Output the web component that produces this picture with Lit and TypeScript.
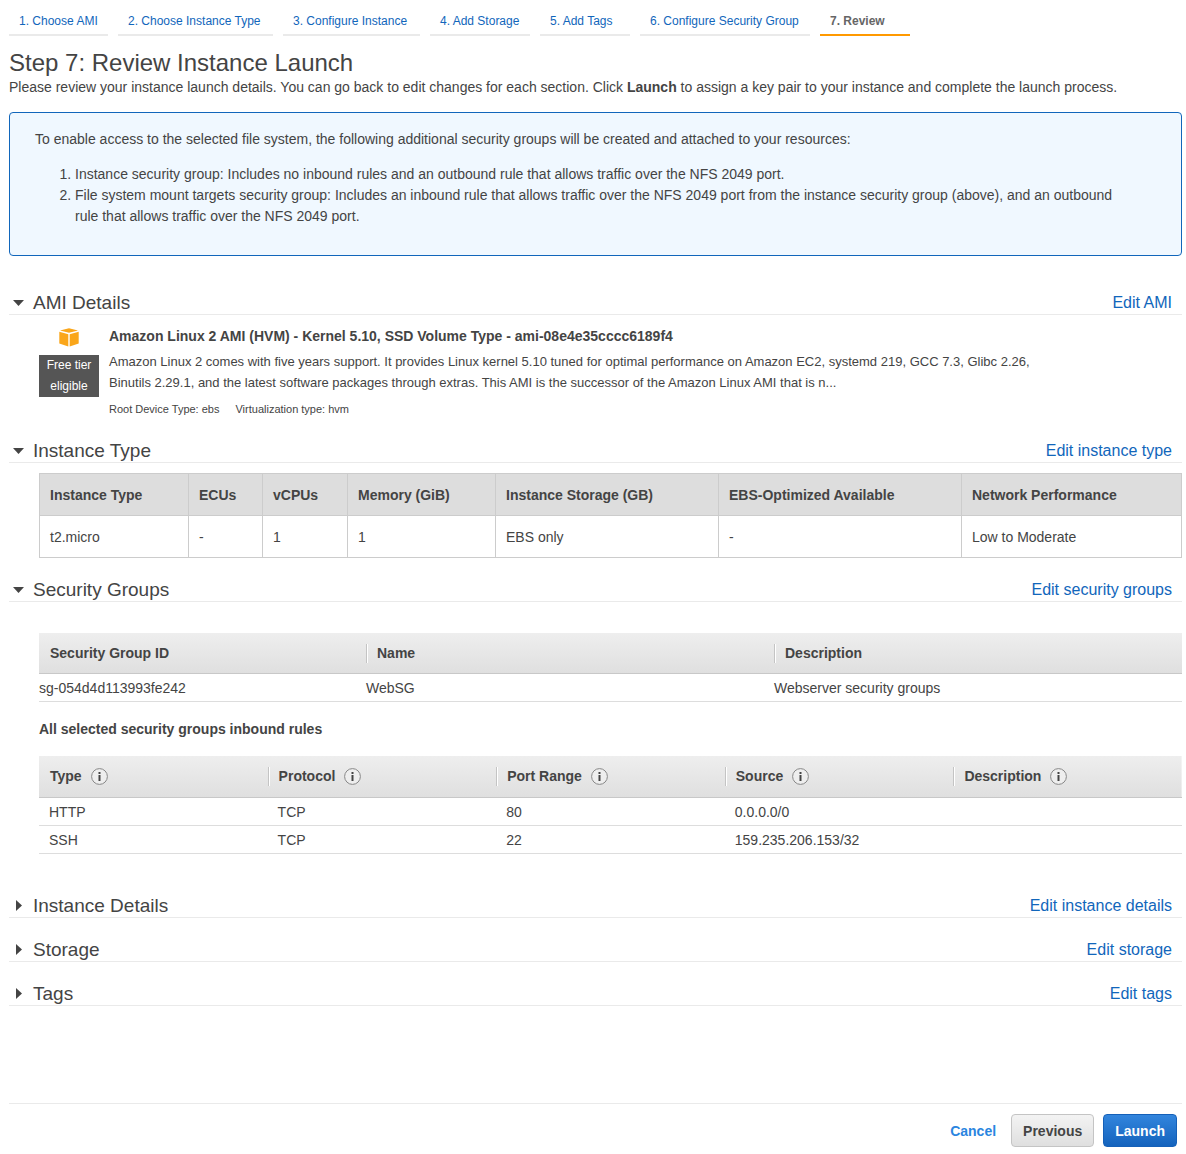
import { LitElement, html, css, nothing, TemplateResult } from "lit";
import { customElement, property, state } from "lit/decorators.js";
import { classMap } from "lit/directives/class-map.js";

const STEPS = [
  "1. Choose AMI",
  "2. Choose Instance Type",
  "3. Configure Instance",
  "4. Add Storage",
  "5. Add Tags",
  "6. Configure Security Group",
  "7. Review",
];

const INSTANCE_COLUMNS = [
  { title: "Instance Type", value: "t2.micro", size: "c-type" },
  { title: "ECUs", value: "-", size: "c-ecu" },
  { title: "vCPUs", value: "1", size: "c-cpu" },
  { title: "Memory (GiB)", value: "1", size: "c-mem" },
  { title: "Instance Storage (GB)", value: "EBS only", size: "c-store" },
  { title: "EBS-Optimized Available", value: "-", size: "c-ebs" },
  { title: "Network Performance", value: "Low to Moderate", size: "c-net" },
];

const RULE_COLUMNS = ["Type", "Protocol", "Port Range", "Source", "Description"];
const RULES = [
  ["HTTP", "TCP", "80", "0.0.0.0/0", ""],
  ["SSH", "TCP", "22", "159.235.206.153/32", ""],
];

@customElement("review-section")
export class ReviewSection extends LitElement {
  @property() heading = "";
  @property() action = "";
  @property({ type: Boolean }) open = false;

  static styles = css`
    :host {
      display: block;
    }
    .bar {
      display: flex;
      justify-content: space-between;
      align-items: center;
      height: 22px;
      padding: 2px 10px 0 0;
      border-bottom: 1px solid #eaeaea;
    }
    .title {
      margin: 0;
      font-size: 19px;
      font-weight: normal;
    }
    .toggle {
      display: flex;
      align-items: center;
      padding: 0 0 0 4px;
      border: 0;
      background: none;
      color: #444;
      font: inherit;
      line-height: 26px;
      cursor: pointer;
    }
    .arrow {
      width: 12px;
      height: 12px;
      margin-right: 8px;
      fill: #444;
    }
    .edit {
      color: #1166bb;
      font-size: 16px;
      line-height: 24px;
      text-decoration: none;
    }
  `;

  render() {
    return html`
      <div class="bar">
        <h2 class="title">
          <button
            class="toggle"
            aria-expanded=${this.open ? "true" : "false"}
            @click=${() => (this.open = !this.open)}
          >
            <svg class="arrow" viewBox="0 0 12 12" aria-hidden="true">
              <path d=${this.open ? "M0 3h11L5.500 9z" : "M3 0v11l6-5.500z"} />
            </svg>
            ${this.heading}
          </button>
        </h2>
        <a class="edit" href="#">${this.action}</a>
      </div>
      ${this.open ? html`<slot></slot>` : nothing}
    `;
  }
}

@customElement("app-root")
export class AppRoot extends LitElement {
  @state() private current = 6;

  static styles = css`
    :host {
      display: block;
      color: #444;
      background: #fff;
      font-family: "Liberation Sans", Arial, sans-serif;
      font-size: 14px;
      line-height: 21px;
    }
    .page {
      padding: 6px 4px 7px 9px;
    }
    .steps {
      display: grid;
      grid-template-columns: 99px 155px 137px 100px 90px 170px 90px;
      gap: 10px;
      margin: 0;
      padding: 0;
      list-style: none;
      font-size: 12px;
    }
    .step {
      box-sizing: border-box;
      height: 30px;
      padding: 5px 10px 0;
      border-bottom: 2px solid #eaeaea;
      white-space: nowrap;
    }
    .step.current {
      border-color: #f90;
      font-weight: bold;
    }
    .step-link {
      color: #1166bb;
      text-decoration: none;
    }
    .current .step-link {
      color: #666;
    }
    .heading {
      margin: 12px 0 0;
      font-size: 24px;
      font-weight: normal;
      line-height: 30px;
    }
    .intro {
      margin: 0 0 16px;
      line-height: 18px;
    }
    .notice {
      padding: 16px 50px 28px 25px;
      border: 1px solid #1166bb;
      border-radius: 4px;
      background: #f0f8ff;
    }
    .notice-text {
      margin: 0 0 14px;
    }
    .notice-list {
      margin: 0;
      padding-left: 40px;
    }
    review-section.first {
      margin-top: 34px;
    }
    .ami {
      display: flex;
      gap: 10px;
      padding: 10px 140px 0 30px;
      height: 113px;
    }
    .badge {
      display: flex;
      flex: none;
      flex-direction: column;
      align-items: center;
      gap: 7px;
      width: 60px;
    }
    .cube {
      width: 20px;
      height: 20px;
      margin-top: 3px;
    }
    .free {
      width: 60px;
      background: #555;
      color: #fff;
      font-size: 12px;
      text-align: center;
    }
    .ami-name {
      margin: 0;
      font-size: 14px;
      line-height: 22px;
    }
    .ami-text {
      margin: 4px 0;
      font-size: 13px;
    }
    .ami-meta {
      display: flex;
      gap: 16px;
      margin: 0;
      font-size: 11px;
      line-height: 24px;
    }
    table {
      width: 100%;
      table-layout: fixed;
      border-collapse: collapse;
    }
    th,
    td {
      text-align: left;
    }
    .body {
      padding-left: 30px;
    }
    .instance {
      padding-top: 10px;
      padding-bottom: 19px;
    }
    .specs th,
    .specs td {
      height: 39px;
      padding: 2px 10px 0;
      border: 1px solid #ccc;
    }
    .specs th {
      background: #ddd;
    }
    .c-type {
      width: 128px;
    }
    .c-ecu {
      width: 53px;
    }
    .c-cpu {
      width: 64px;
    }
    .c-mem {
      width: 127px;
    }
    .c-store {
      width: 202px;
    }
    .c-ebs {
      width: 222px;
    }
    .security {
      padding-top: 31px;
      padding-bottom: 39px;
    }
    .grid thead tr {
      background: linear-gradient(#eee, #dfdfdf);
    }
    .grid th {
      height: 40px;
      padding: 0;
      border-bottom: 1px solid #c8c8c8;
    }
    .grid td {
      height: 25px;
      padding: 2px 0 0;
      border-bottom: 1px solid #ddd;
    }
    .rules th {
      height: 41px;
    }
    .rules td {
      padding-left: 10px;
    }
    .label {
      display: flex;
      align-items: center;
      gap: 9px;
      height: 19px;
      padding-left: 10px;
      border-left: 1px solid #c4c4c4;
      box-shadow: inset 1px 0 #fff;
    }
    .label.lead {
      border-color: transparent;
      box-shadow: none;
    }
    .c-id {
      width: 327px;
    }
    .c-name {
      width: 408px;
    }
    .sub {
      margin: 17px 0 16px;
      font-size: 14px;
    }
    .info {
      display: flex;
      padding: 0;
      border: 0;
      background: none;
    }
    .info-icon {
      width: 17px;
      height: 17px;
    }
    .collapsed {
      display: grid;
      gap: 19px;
    }
    .footer {
      display: flex;
      justify-content: flex-end;
      align-items: center;
      gap: 9px;
      margin-top: 97px;
      padding: 10px 5px 0 0;
      border-top: 1px solid #eaeaea;
    }
    .btn {
      box-sizing: border-box;
      height: 33px;
      padding: 1px 11px 0;
      border: 1px solid #c4c4c4;
      border-radius: 4px;
      background: linear-gradient(#f3f3f3, #dfdfdf);
      color: #444;
      font: bold 14px/21px "Liberation Sans", Arial, sans-serif;
      cursor: pointer;
    }
    .btn.plain {
      padding: 1px 5px 0;
      border-color: transparent;
      background: none;
      color: #2a85e0;
    }
    .btn.primary {
      border-color: #1560b8;
      background: linear-gradient(#3285dd, #1463bd);
      color: #fff;
    }
  `;

  private infoButton(name: string): TemplateResult {
    return html`<button class="info" aria-label=${name}>
      <svg class="info-icon" viewBox="0 0 17 17" aria-hidden="true">
        <circle cx="8.500" cy="8.500" r="7.900" fill="#eee" stroke="#888" />
        <path d="M7.500 4h2v2h-2zM7.500 7h2v6h-2z" fill="#444" />
      </svg>
    </button>`;
  }

  private amiSection() {
    return html`<review-section class="first" heading="AMI Details" action="Edit AMI" open>
      <div class="ami">
        <div class="badge">
          <svg class="cube" viewBox="0 0 20 20" aria-hidden="true">
            <g fill="#faa61a">
              <path d="M1 2.400 10 .2l9 2.200-9 2.300z" />
              <path d="M.3 3.700 9.300 6.200V18.500L.3 15.600z" />
              <path d="M19.700 3.700 10.700 6.200V18.500l9-2.900z" />
            </g>
          </svg>
          <div class="free">Free tier<br />eligible</div>
        </div>
        <div>
          <h3 class="ami-name">
            Amazon Linux 2 AMI (HVM) - Kernel 5.10, SSD Volume Type - ami-08e4e35cccc6189f4
          </h3>
          <p class="ami-text">
            Amazon Linux 2 comes with five years support. It provides Linux kernel 5.10 tuned for
            optimal performance on Amazon EC2, systemd 219, GCC 7.3, Glibc 2.26, Binutils 2.29.1,
            and the latest software packages through extras. This AMI is the successor of the
            Amazon Linux AMI that is n...
          </p>
          <p class="ami-meta">
            <span>Root Device Type: ebs</span><span>Virtualization type: hvm</span>
          </p>
        </div>
      </div>
    </review-section>`;
  }

  private instanceSection() {
    return html`<review-section heading="Instance Type" action="Edit instance type" open>
      <div class="body instance">
        <table class="specs">
          <thead>
            <tr>
              ${INSTANCE_COLUMNS.map((c) => html`<th scope="col" class=${c.size}>${c.title}</th>`)}
            </tr>
          </thead>
          <tbody>
            <tr>
              ${INSTANCE_COLUMNS.map((c) => html`<td>${c.value}</td>`)}
            </tr>
          </tbody>
        </table>
      </div>
    </review-section>`;
  }

  private securitySection() {
    return html`<review-section heading="Security Groups" action="Edit security groups" open>
      <div class="body security">
        <table class="grid">
          <thead>
            <tr>
              <th scope="col" class="c-id"><div class="label lead">Security Group ID</div></th>
              <th scope="col" class="c-name"><div class="label">Name</div></th>
              <th scope="col"><div class="label">Description</div></th>
            </tr>
          </thead>
          <tbody>
            <tr>
              <td>sg-054d4d113993fe242</td>
              <td>WebSG</td>
              <td>Webserver security groups</td>
            </tr>
          </tbody>
        </table>
        <h3 class="sub">All selected security groups inbound rules</h3>
        <table class="grid rules">
          <thead>
            <tr>
              ${RULE_COLUMNS.map(
                (name, i) => html`<th scope="col">
                  <div class=${classMap({ label: true, lead: i === 0 })}>
                    ${name} ${this.infoButton(name)}
                  </div>
                </th>`
              )}
            </tr>
          </thead>
          <tbody>
            ${RULES.map((rule) => html`<tr>${rule.map((cell) => html`<td>${cell}</td>`)}</tr>`)}
          </tbody>
        </table>
      </div>
    </review-section>`;
  }

  render() {
    return html`<div class="page">
      <nav>
        <ol class="steps">
          ${STEPS.map(
            (step, i) => html`<li class=${classMap({ step: true, current: i === this.current })}>
              <a class="step-link" href="#" @click=${() => (this.current = i)}>${step}</a>
            </li>`
          )}
        </ol>
      </nav>
      <main>
        <h1 class="heading">Step 7: Review Instance Launch</h1>
        <p class="intro">
          Please review your instance launch details. You can go back to edit changes for each
          section. Click <b>Launch</b> to assign a key pair to your instance and complete the launch
          process.
        </p>
        <div class="notice">
          <p class="notice-text">
            To enable access to the selected file system, the following additional security groups
            will be created and attached to your resources:
          </p>
          <ol class="notice-list">
            <li>
              Instance security group: Includes no inbound rules and an outbound rule that allows
              traffic over the NFS 2049 port.
            </li>
            <li>
              File system mount targets security group: Includes an inbound rule that allows traffic
              over the NFS 2049 port from the instance security group (above), and an outbound rule
              that allows traffic over the NFS 2049 port.
            </li>
          </ol>
        </div>
        ${this.amiSection()} ${this.instanceSection()} ${this.securitySection()}
        <div class="collapsed">
          <review-section heading="Instance Details" action="Edit instance details"></review-section>
          <review-section heading="Storage" action="Edit storage"></review-section>
          <review-section heading="Tags" action="Edit tags"></review-section>
        </div>
      </main>
      <footer class="footer">
        <button class="btn plain">Cancel</button>
        <button class="btn">Previous</button>
        <button class="btn primary">Launch</button>
      </footer>
    </div>`;
  }
}
